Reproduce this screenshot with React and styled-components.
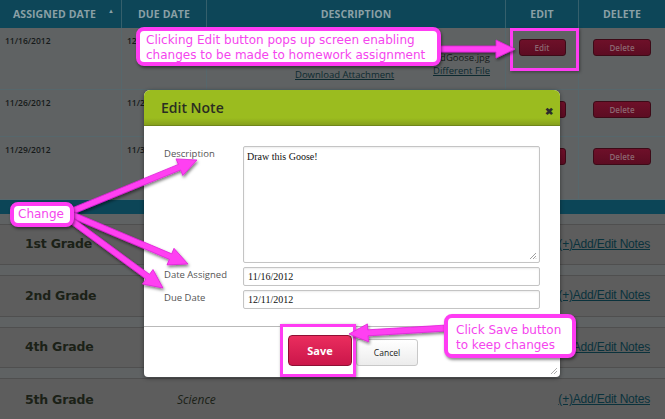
import React from 'react';
import styled, { createGlobalStyle } from 'styled-components';

const GlobalStyle = createGlobalStyle`
  html, body { margin: 0; padding: 0; background: #5f6263; overflow: hidden; }
  * { box-sizing: border-box; }
`

const Page = styled.div`
  position: relative;
  width: 665px;
  height: 419px;
  overflow: hidden;
  background: #5f6263;
  font-family: "Open Sans", "Liberation Sans", sans-serif;
`

const cols = '121px 85px 299px 73px 87px'

const HeadRow = styled.div`
  display: grid;
  grid-template-columns: ${cols};
  height: 28px;
  background: #0d4658;
`
const HeadCell = styled.div`
  display: flex;
  align-items: center;
  justify-content: center;
  gap: 12px;
  color: #8aa0a6;
  font-size: 10.5px;
  font-weight: 700;
  letter-spacing: 0.1px;
  padding-left: ${p => (p.first ? '6px' : '0')};
  border-left: ${p => (p.first ? 'none' : '1px solid #35606c')};
`
const SortMark = styled.span`
  font-size: 6px;
  margin-top: -6px;
`

const Row = styled.div`
  display: grid;
  grid-template-columns: ${cols};
  height: ${p => p.h}px;
  border-bottom: 1px solid #56676c;
`
const Cell = styled.div`
  padding: 7px 5px;
  font-size: 8.5px;
  font-weight: 600;
  color: #161a1a;
  border-left: ${p => (p.first ? 'none' : '1px solid #56676c')};
  display: flex;
  flex-direction: column;
  align-items: ${p => p.center ? 'center' : 'flex-start'};
`
const DescCell = styled(Cell)`
  flex-direction: row;
  align-items: stretch;
  padding: 9px 15px 8px 88px;
  font-weight: 400;
  font-size: 9.5px;
`
const DescLeft = styled.div`
  flex: 1;
  width: 0;
  min-width: 0;
  display: flex;
  flex-direction: column;
  justify-content: flex-end;
`
const DescRight = styled.div`
  display: flex;
  flex-direction: column;
  align-items: flex-end;
  padding-top: 14px;
`
const Link = styled.span`
  color: #0d2a30;
  text-decoration: underline;
  white-space: nowrap;
`
const DarkText = styled.span`
  color: #161a1a;
  white-space: nowrap;
`
const RowButton = styled.div`
  width: ${p => p.w}px;
  height: 17px;
  margin-top: 4px;
  border-radius: 3px;
  border: 1px solid #3d0a17;
  background: linear-gradient(#6e1029, #5c0c22);
  color: #8c6670;
  font-size: 8px;
  display: flex;
  align-items: center;
  justify-content: center;
`

const Band = styled.div`
  height: 14px;
  background: #0c4557;
  margin-bottom: 10px;
`
const GradeList = styled.div`
  display: flex;
  flex-direction: column;
  gap: 10px;
`
const GradeRow = styled.div`
  height: ${p => p.h}px;
  border-top: 1px solid #4f4f4f;
  border-bottom: 1px solid #4f4f4f;
  background: #5d5d5d;
  display: flex;
  align-items: center;
  padding: 0 15px 2px 25px;
`
const GradeName = styled.div`
  width: 152px;
  font-size: 12.5px;
  font-weight: 700;
  color: #1b2117;
  font-family: "DejaVu Sans", sans-serif;
  letter-spacing: -0.2px;
`
const Subject = styled.div`
  flex: 1;
  font-size: 12px;
  font-style: italic;
  color: #1b2117;
  font-family: "Open Sans", sans-serif;
`
const NotesLink = styled.div`
  font-size: 12px;
  color: #0a323c;
  text-decoration: underline;
  font-family: "Liberation Sans", sans-serif;
  letter-spacing: -0.2px;
`

/* modal */
const Modal = styled.div`
  position: absolute;
  left: 144px;
  top: 90px;
  width: 416px;
  height: 287px;
  background: #fff;
  border-radius: 6px 6px 4px 4px;
  box-shadow: 0 1px 4px rgba(0,0,0,0.45);
  display: flex;
  flex-direction: column;
`
const ModalHead = styled.div`
  flex-shrink: 0;
  height: 36px;
  border-radius: 6px 6px 0 0;
  background: linear-gradient(#9bbc1f 80%, #86a01c);
  border-bottom: 1px solid #6f8519;
  display: flex;
  align-items: center;
  justify-content: space-between;
  padding: 0 7px 0 17px;
`
const ModalTitle = styled.div`
  font-size: 14px;
  font-weight: 600;
  color: #2a2d22;
`
const Close = styled.div`
  font-size: 10px;
  font-weight: 700;
  color: #2c2c2c;
  margin-top: 7px;
`
const ModalBody = styled.div`
  flex-shrink: 0;
  padding: 20px 20px 0 20px;
  display: grid;
  grid-template-columns: 79px 297px;
  row-gap: 4px;
  height: 201px;
  align-content: start;
  border-bottom: 1px solid #b9b9b9;
`
const Label = styled.div`
  font-size: 9.5px;
  color: #555;
  padding-top: ${p => p.pt}px;
`
const Field = styled.div`
  position: relative;
  height: ${p => p.h}px;
  border: 1px solid #c4c4c4;
  border-radius: 2px;
  box-shadow: inset 0 1px 2px rgba(0,0,0,0.08);
  font-family: "Liberation Serif", serif;
  font-size: ${p => p.fs}px;
  color: #111;
  padding: ${p => p.pad};
`
const Grip = styled.svg`
  position: absolute;
  right: 2px;
  bottom: 2px;
`
const ModalFoot = styled.div`
  flex: 1;
  position: relative;
  display: flex;
  justify-content: center;
  align-items: flex-end;
  gap: 4px;
  padding-bottom: 11px;
  padding-left: 2px;
`
const SaveButton = styled.div`
  width: 64px;
  height: 31px;
  border-radius: 4px;
  border: 1px solid #8e0f33;
  background: linear-gradient(#ea2d5e, #cb164a);
  color: #fff;
  font-size: 11px;
  font-weight: 700;
  display: flex;
  align-items: center;
  justify-content: center;
`
const CancelButton = styled.div`
  width: 62px;
  height: 27px;
  border-radius: 3px;
  border: 1px solid #c8c8c8;
  background: linear-gradient(#fff, #ececec);
  color: #222;
  font-size: 8.5px;
  display: flex;
  align-items: center;
  justify-content: center;
`

/* annotations */
const Overlay = styled.svg`
  position: absolute;
  left: 0;
  top: 0;
  pointer-events: none;
`
const Callout = styled.div`
  position: absolute;
  left: ${p => p.x}px;
  top: ${p => p.y}px;
  width: ${p => p.w}px;
  height: ${p => p.h}px;
  border: 4px solid #ff3cf3;
  border-radius: 8px;
  background: #fff;
  color: #f545ee;
  font-family: "DejaVu Sans", sans-serif;
  font-size: ${p => p.fs}px;
  line-height: 15px;
  padding: ${p => p.pad};
  box-shadow: 1px 2px 3px rgba(0,0,0,0.45);
  white-space: nowrap;
`
const Frame = styled.div`
  position: absolute;
  left: ${p => p.x}px;
  top: ${p => p.y}px;
  width: ${p => p.w}px;
  height: ${p => p.h}px;
  border: 3px solid #ff3cf3;
  box-shadow: 1px 1px 3px rgba(0,0,0,0.4);
`

function arrow(x1, y1, x2, y2, sw = 3, hw = 9, hl = 19) {
  const dx = x2 - x1, dy = y2 - y1
  const len = Math.hypot(dx, dy)
  const ux = dx / len, uy = dy / len
  const nx = -uy, ny = ux
  const bx = x2 - ux * hl, by = y2 - uy * hl
  const pts = [
    [x1 + nx * sw, y1 + ny * sw],
    [bx + nx * sw, by + ny * sw],
    [bx + nx * hw, by + ny * hw],
    [x2, y2],
    [bx - nx * hw, by - ny * hw],
    [bx - nx * sw, by - ny * sw],
    [x1 - nx * sw, y1 - ny * sw],
  ]
  return pts.map(p => p.map(v => v.toFixed(1)).join(',')).join(' ')
}

const arrows = [
  [438, 49, 515, 49],
  [70, 212, 197, 160],
  [70, 214, 188, 264],
  [68, 218, 163, 288],
  [447, 328, 349, 334],
]

const rows = [
  { h: 62, assigned: '11/16/2012', due: '12/11/2012', first: true },
  { h: 47, assigned: '11/26/2012', due: '11/27/2012' },
  { h: 63, assigned: '11/29/2012', due: '11/30/2012' },
]

const grades = [
  { name: '1st Grade', h: 41 },
  { name: '2nd Grade', h: 42 },
  { name: '4th Grade', h: 41 },
  { name: '5th Grade', h: 44, subject: 'Science' },
]

export default function App() {
  return (
    <Page>
      <GlobalStyle />
      <HeadRow>
        <HeadCell first>ASSIGNED DATE <SortMark>▲</SortMark></HeadCell>
        <HeadCell>DUE DATE</HeadCell>
        <HeadCell>DESCRIPTION</HeadCell>
        <HeadCell>EDIT</HeadCell>
        <HeadCell>DELETE</HeadCell>
      </HeadRow>
      {rows.map(r => (
        <Row key={r.assigned} h={r.h}>
          <Cell first>{r.assigned}</Cell>
          <Cell>{r.due}</Cell>
          {r.first ? (
            <DescCell>
              <DescLeft><Link>Download Attachment</Link></DescLeft>
              <DescRight>
                <DarkText>Attachment: WildGoose.jpg</DarkText>
                <Link>Different File</Link>
              </DescRight>
            </DescCell>
          ) : <Cell />}
          <Cell center><RowButton w={47}>Edit</RowButton></Cell>
          <Cell center><RowButton w={58}>Delete</RowButton></Cell>
        </Row>
      ))}
      <Band />
      <GradeList>
        {grades.map(g => (
          <GradeRow key={g.name} h={g.h}>
            <GradeName>{g.name}</GradeName>
            <Subject>{g.subject}</Subject>
            <NotesLink>(+)Add/Edit Notes</NotesLink>
          </GradeRow>
        ))}
      </GradeList>

      <Modal>
        <ModalHead>
          <ModalTitle>Edit Note</ModalTitle>
          <Close>✖</Close>
        </ModalHead>
        <ModalBody>
          <Label pt={1}>Description</Label>
          <Field h={117} fs={10} pad="4px 3px">
            Draw this Goose!
            <Grip width="8" height="8" viewBox="0 0 8 8">
              <path d="M7 1 L1 7 M7 4 L4 7 M7 6.5 L6.5 7" stroke="#888" strokeWidth="0.8" />
            </Grip>
          </Field>
          <Label pt={1}>Date Assigned</Label>
          <Field h={19} fs={10} pad="3px 4px">11/16/2012</Field>
          <Label pt={1}>Due Date</Label>
          <Field h={19} fs={10} pad="3px 4px">12/11/2012</Field>
        </ModalBody>
        <ModalFoot>
          <SaveButton>Save</SaveButton>
          <CancelButton>Cancel</CancelButton>
          <Grip width="8" height="8" viewBox="0 0 8 8">
            <path d="M7 1 L1 7 M7 4 L4 7" stroke="#999" strokeWidth="0.8" />
          </Grip>
        </ModalFoot>
      </Modal>

      <Frame x={510} y={28} w={69} h={43} />
      <Frame x={280} y={324} w={76} h={53} />

      <Overlay width="665" height="419" viewBox="0 0 665 419">
        <defs>
          <filter id="sh" x="-20%" y="-20%" width="140%" height="140%">
            <feDropShadow dx="1" dy="2" stdDeviation="1.5" floodColor="#000" floodOpacity="0.5" />
          </filter>
        </defs>
        {arrows.map((a, i) => (
          <polygon key={i} points={arrow(...a)} fill="#ff40f2" stroke="#e020d8" strokeWidth="0.8" strokeLinejoin="round" filter="url(#sh)" />
        ))}
      </Overlay>

      <Callout x={136} y={27} w={305} h={39} fs={12} pad="2px 6px">
        Clicking Edit button pops up screen enabling<br />changes to be made to homework assignment
      </Callout>
      <Callout x={10} y={202} w={64} h={25} fs={12} pad="1px 4px">
        Change
      </Callout>
      <Callout x={444} y={314} w={132} h={44} fs={12} pad="5px 8px">
        Click Save button<br />to keep changes
      </Callout>
    </Page>
  )
}
